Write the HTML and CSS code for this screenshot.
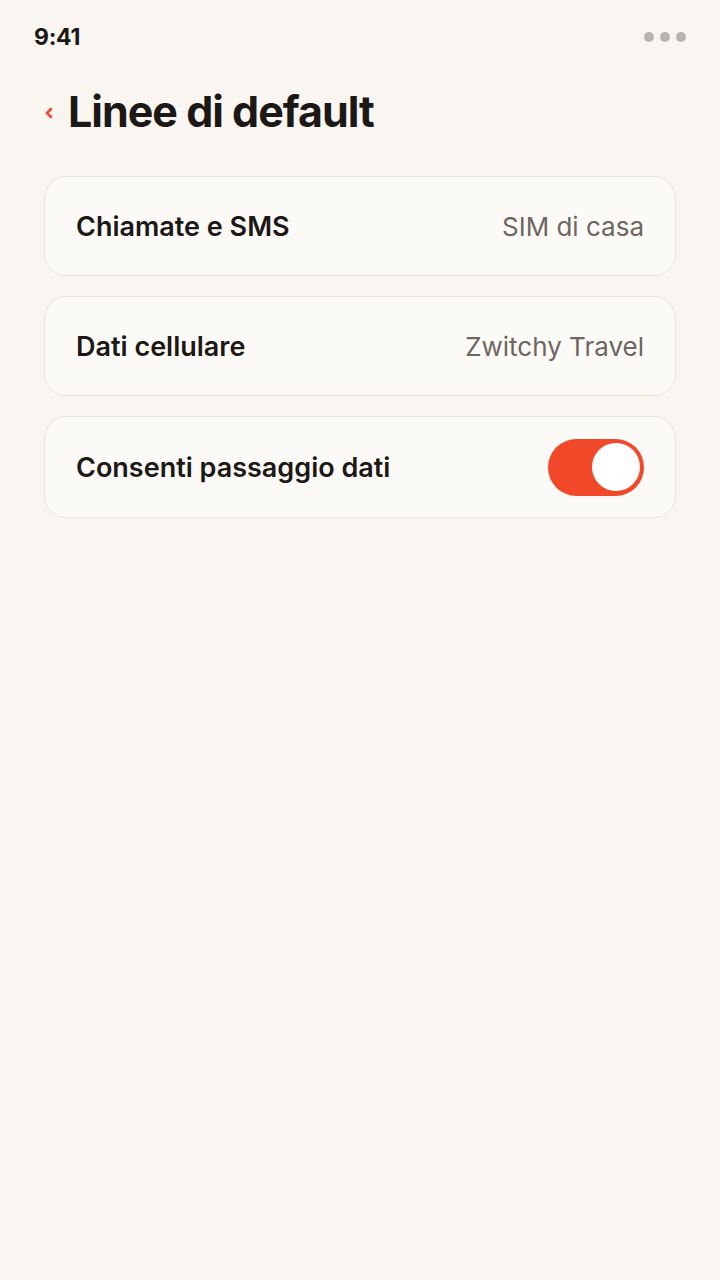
FILE: index.html
```html
<!DOCTYPE html>
<html lang="it">
<head>
<meta charset="UTF-8">
<meta name="viewport" content="width=device-width, initial-scale=1.0">
<title>Linee di default</title>
<link rel="stylesheet" href="styles.css">
</head>
<body>

<!-- Status bar -->
<div class="status-bar">
  <span class="time">9:41</span>
  <div class="dots">
    <span></span><span></span><span></span>
  </div>
</div>

<!-- Header -->
<div class="header">
  <svg class="back" width="10" height="14" viewBox="0 0 10 14">
    <path d="M7 3 L3 7 L7 11" fill="none" stroke="#f04a2a" stroke-width="2.6" stroke-linecap="round" stroke-linejoin="round"/>
  </svg>
  <h1>Linee di default</h1>
</div>

<!-- Settings list -->
<div class="list">
  <div class="card">
    <span class="label">Chiamate e SMS</span>
    <span class="value">SIM di casa</span>
  </div>
  <div class="card">
    <span class="label">Dati cellulare</span>
    <span class="value">Zwitchy Travel</span>
  </div>
  <div class="card tall">
    <span class="label">Consenti passaggio dati</span>
    <div class="toggle on"><div class="knob"></div></div>
  </div>
</div>

</body>
</html>
```
FILE: styles.css
```css
body {
  margin: 0;
  background-color: #f9f6f2;
  font-family: Inter, "Noto Sans", sans-serif;
  color: #1c1815;
}

/* Status bar */
.status-bar {
  display: flex;
  justify-content: space-between;
  align-items: center;
  height: 74px;
  padding: 0 34px;
}

.time {
  font-size: 23px;
  font-weight: 700;
  letter-spacing: -0.3px;
}

.dots {
  display: flex;
  gap: 6px;
}

.dots span {
  width: 10px;
  height: 10px;
  border-radius: 50%;
  background-color: #b9b3ad;
}

/* Header */
.header {
  display: flex;
  align-items: center;
  gap: 14px;
  padding: 0 44px;
  height: 74px;
}

.back {
  margin-top: 4px;
}

h1 {
  margin: 0;
  font-size: 43px;
  font-weight: 700;
  letter-spacing: -1px;
}

/* Cards */
.list {
  display: flex;
  flex-direction: column;
  gap: 20px;
  padding: 28px 44px 0;
}

.card {
  display: flex;
  justify-content: space-between;
  align-items: center;
  height: 98px;
  padding: 0 31px;
  background-color: #fcfaf7;
  border: 1px solid #ebe3da;
  border-radius: 22px;
}

.card.tall {
  height: 100px;
}

.label {
  font-size: 27px;
  font-weight: 600;
}

.value {
  font-size: 26px;
  color: #6e6660;
}

/* Toggle */
.toggle {
  display: flex;
  align-items: center;
  width: 96px;
  height: 57px;
  padding: 0 4px;
  box-sizing: border-box;
  border-radius: 29px;
  background-color: #f2482a;
}

.toggle.on {
  justify-content: flex-end;
}

.knob {
  width: 48px;
  height: 48px;
  border-radius: 50%;
  background-color: #fff;
}
```
